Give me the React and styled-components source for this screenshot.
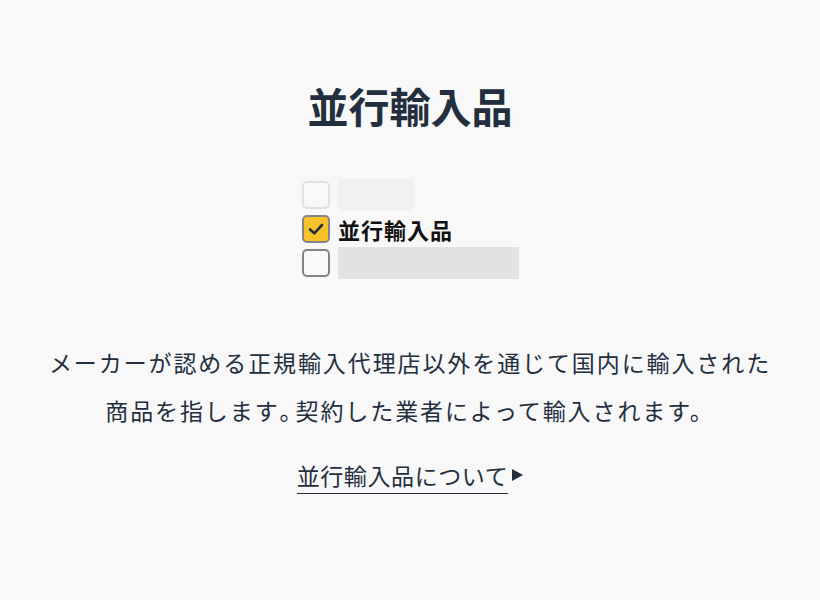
import React from "react";
import styled, { createGlobalStyle } from "styled-components";

const GlobalStyle = createGlobalStyle`
  html, body {
    margin: 0;
    padding: 0;
    background: #f8f8f8;
  }
  body {
    font-family: "Noto Sans CJK JP", "Noto Sans", sans-serif;
    color: #232f3e;
  }
`;

const Page = styled.div`
  width: 820px;
  height: 600px;
  display: flex;
  flex-direction: column;
  align-items: center;
  padding-top: 77px;
  box-sizing: border-box;
`;

const Title = styled.h1`
  margin: 0;
  font-size: 41px;
  font-weight: 700;
  line-height: 56px;
  color: #232f3e;
`;

const Sample = styled.div`
  margin-top: 48px;
  display: flex;
  flex-direction: column;
  gap: 6px;
  width: 218px;
  padding-left: 2px;
`;

const Row = styled.div`
  display: flex;
  align-items: center;
  gap: 8px;
  height: 28px;
`;

const Box = styled.div`
  box-sizing: border-box;
  width: 28px;
  height: 28px;
  border-radius: 5px;
  border: 2px solid ${(p) => (p.$faded ? "#e2e2e2" : "#858585")};
  background: ${(p) => (p.$checked ? "#f7c22a" : p.$faded ? "#f8f8f8" : "#fafafa")};
  display: flex;
  align-items: center;
  justify-content: center;
  flex-shrink: 0;
`;

const Placeholder = styled.div`
  width: ${(p) => p.$w}px;
  height: 32px;
  background: ${(p) => p.$color};
`;

const Label = styled.span`
  font-size: 22px;
  font-weight: 700;
  color: #111;
  letter-spacing: 1px;
`;

const Description = styled.p`
  margin: 61px 0 0;
  font-size: 23px;
  line-height: 48px;
  letter-spacing: 1.9px;
  text-align: center;
  white-space: nowrap;
  color: #232f3e;
`;

const Narrow = styled.span`
  letter-spacing: -7px;
`;

const MoreLink = styled.a`
  margin-top: 27px;
  display: flex;
  align-items: flex-start;
  gap: 4px;
  font-size: 23px;
  letter-spacing: 0.6px;
  color: #232f3e;
  text-decoration: none;
  cursor: pointer;
`;

const LinkText = styled.span`
  border-bottom: 1.5px solid #232f3e;
  line-height: 28px;
  padding-bottom: 4px;
`;

const Arrow = styled.span`
  margin-top: 8px;
  width: 0;
  height: 0;
  border-top: 6px solid transparent;
  border-bottom: 6px solid transparent;
  border-left: 11px solid #232f3e;
`;

const Check = () => (
  <svg width="20" height="20" viewBox="0 0 20 20">
    <path d="M4 10.5 L8.3 14.3 L16 6" fill="none" stroke="#232f3e" strokeWidth="2.6" strokeLinecap="round" strokeLinejoin="round" />
  </svg>
);

export default function App() {
  return (
    <>
      <GlobalStyle />
      <Page>
        <Title>並行輸入品</Title>
        <Sample>
          <Row>
            <Box $faded />
            <Placeholder $w={76} $color="#f1f1f1" />
          </Row>
          <Row>
            <Box $checked>
              <Check />
            </Box>
            <Label>並行輸入品</Label>
          </Row>
          <Row>
            <Box />
            <Placeholder $w={181} $color="#e2e2e2" />
          </Row>
        </Sample>
        <Description>
          メーカーが認める正規輸入代理店以外を通じて国内に輸入された
          <br />
          商品を指します<Narrow>。</Narrow>契約した業者によって輸入されます。
        </Description>
        <MoreLink>
          <LinkText>並行輸入品について</LinkText>
          <Arrow />
        </MoreLink>
      </Page>
    </>
  );
}
